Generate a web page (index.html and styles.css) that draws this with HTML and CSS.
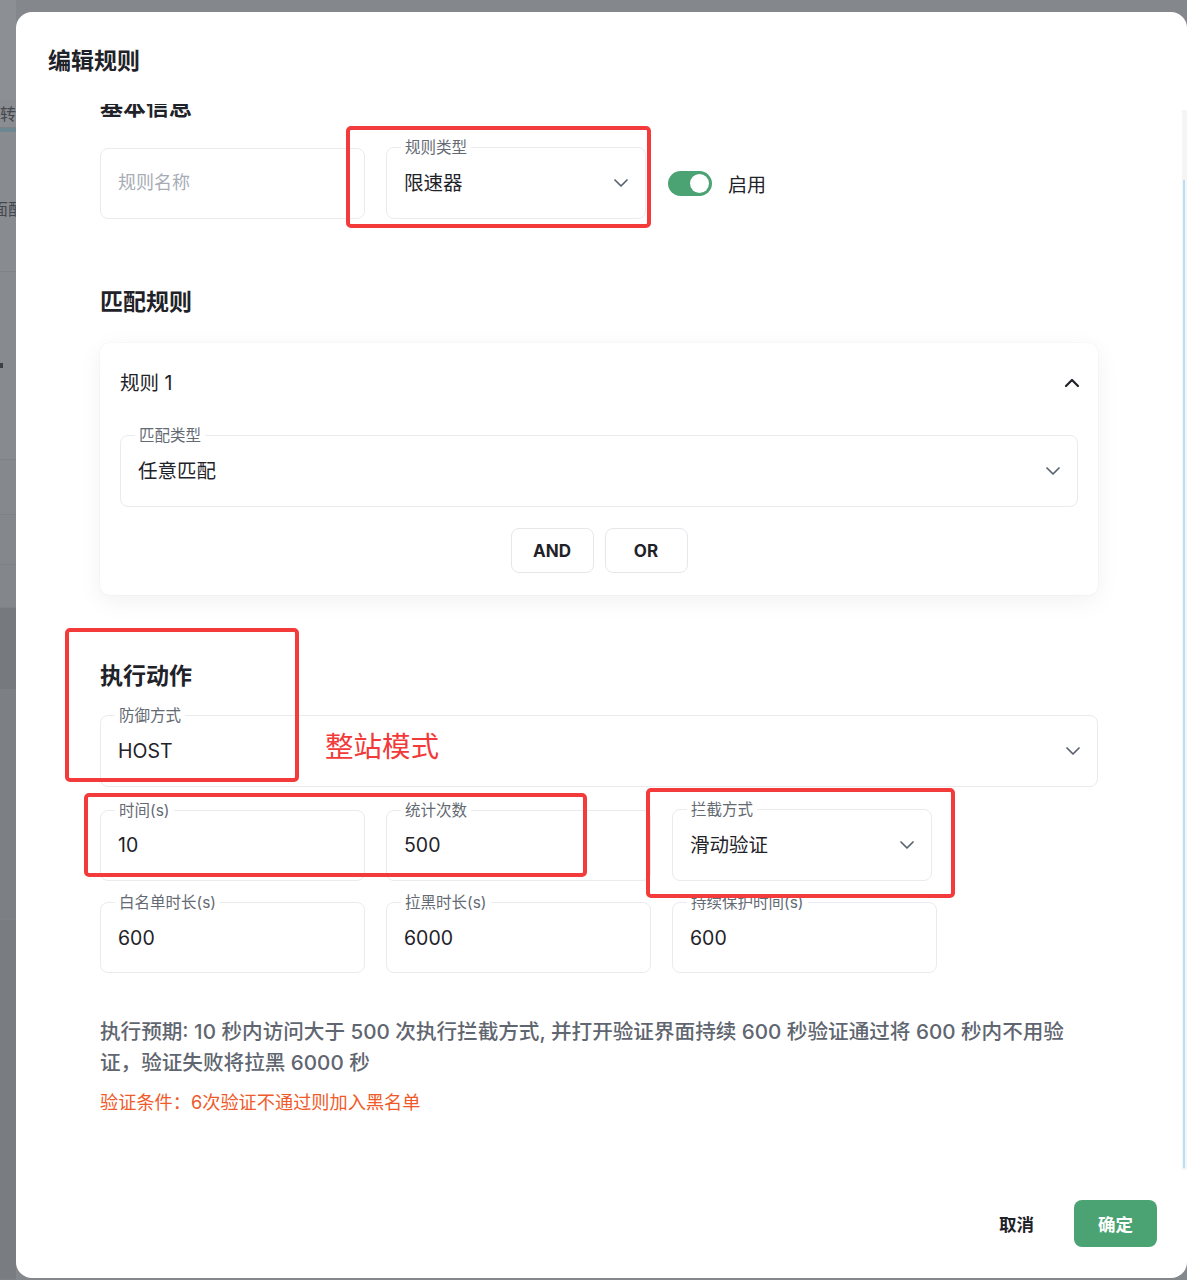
FILE: index.html
```html
<!DOCTYPE html>
<html lang="zh-CN">
<head>
<meta charset="utf-8">
<title>编辑规则</title>
<link rel="stylesheet" href="styles.css">
</head>
<body>
<div class="page">
  <div class="bg-row r-top"></div>
  <div class="bg-row r-a"><span class="bg-text">跳转</span></div>
  <div class="bg-row r-bar"></div>
  <div class="bg-row r-b"><span class="bg-text">页面配</span></div>
  <div class="bg-row r-c"><span class="bg-dot"></span></div>
  <div class="bg-row r-d"></div>
  <div class="bg-row r-e"></div>
  <div class="bg-row r-f"></div>
  <div class="bg-row r-g"></div>
  <div class="bg-row r-h"></div>
  <div class="bg-row r-i"></div>
</div>

<div class="modal">
  <div class="modal-header"><h2 class="modal-title">编辑规则</h2></div>
  <div class="modal-body">
    <div class="body-inner">
      <h3 class="section-title first">基本信息</h3>
      <div class="grid3">
        <div class="field"><span class="placeholder">规则名称</span></div>
        <div class="field select narrow">
          <span class="flabel">规则类型</span>
          <span class="value">限速器</span>
          <svg class="chev" width="14" height="8" viewBox="0 0 14 8"><path d="M1 1l6 6 6-6" fill="none" stroke="#5b6370" stroke-width="1.7" stroke-linecap="round" stroke-linejoin="round"/></svg>
        </div>
        <div class="switch-wrap">
          <span class="switch"><span class="knob"></span></span>
          <span class="switch-label">启用</span>
        </div>
      </div>

      <h3 class="section-title s2">匹配规则</h3>
      <div class="card">
        <div class="card-head">
          <span class="card-title">规则 1</span>
          <svg width="16" height="10" viewBox="0 0 16 10"><path d="M2 8l6-6 6 6" fill="none" stroke="#1f2329" stroke-width="2.2" stroke-linecap="round" stroke-linejoin="round"/></svg>
        </div>
        <div class="field select wide">
          <span class="flabel">匹配类型</span>
          <span class="value">任意匹配</span>
          <svg class="chev" width="14" height="8" viewBox="0 0 14 8"><path d="M1 1l6 6 6-6" fill="none" stroke="#5b6370" stroke-width="1.7" stroke-linecap="round" stroke-linejoin="round"/></svg>
        </div>
        <div class="logic">
          <button class="logic-btn">AND</button>
          <button class="logic-btn">OR</button>
        </div>
      </div>

      <h3 class="section-title s3">执行动作</h3>
      <div class="field select full">
        <span class="flabel">防御方式</span>
        <span class="value">HOST</span>
        <svg class="chev" width="14" height="8" viewBox="0 0 14 8"><path d="M1 1l6 6 6-6" fill="none" stroke="#5b6370" stroke-width="1.7" stroke-linecap="round" stroke-linejoin="round"/></svg>
      </div>

      <div class="grid3 row3">
        <div class="field"><span class="flabel">时间(s)</span><span class="value">10</span></div>
        <div class="field"><span class="flabel">统计次数</span><span class="value">500</span></div>
        <div class="field select narrow">
          <span class="flabel">拦截方式</span>
          <span class="value">滑动验证</span>
          <svg class="chev" width="14" height="8" viewBox="0 0 14 8"><path d="M1 1l6 6 6-6" fill="none" stroke="#5b6370" stroke-width="1.7" stroke-linecap="round" stroke-linejoin="round"/></svg>
        </div>
      </div>
      <div class="grid3 row4">
        <div class="field"><span class="flabel">白名单时长(s)</span><span class="value">600</span></div>
        <div class="field"><span class="flabel">拉黑时长(s)</span><span class="value">6000</span></div>
        <div class="field"><span class="flabel">持续保护时间(s)</span><span class="value">600</span></div>
      </div>

      <p class="summary">执行预期: 10 秒内访问大于 500 次执行拦截方式, 并打开验证界面持续 600 秒验证通过将 600 秒内不用验证，验证失败将拉黑 6000 秒</p>
      <p class="warn">验证条件：6次验证不通过则加入黑名单</p>
    </div>
    <div class="scrollbar"><div class="thumb"></div></div>
  </div>
  <div class="modal-footer">
    <button class="btn-text">取消</button>
    <button class="btn-primary">确定</button>
  </div>
</div>

<div class="mark m1"></div>
<div class="mark m2"></div>
<div class="mark m3"></div>
<div class="mark m4"></div>
<div class="note">整站模式</div>
</body>
</html>
```

FILE: styles.css
```css
* { box-sizing: border-box; }
html, body { margin: 0; padding: 0; }
body {
  width: 1187px;
  height: 1280px;
  overflow: hidden;
  position: relative;
  background: #84878c;
  font-family: "Inter", "Noto Sans CJK SC", "Noto Sans", sans-serif;
  color: #1f2329;
}

/* background page under the mask */
.page { display: flex; flex-direction: column; width: 16px; }
.bg-row { border-bottom: 1px solid #7e8186; overflow: hidden; display: flex; align-items: center; justify-content: flex-end; }
.r-top { height: 100px; background: #8c8f93; border-bottom-color: #8c8f93; }
.r-a { height: 28px; background: #8a8d91; }
.r-bar { height: 4px; background: #6d8791; border: 0; }
.r-b { height: 140px; background: #888b90; align-items: flex-start; padding-top: 66px; }
.r-c { height: 188px; background: #878a8f; justify-content: flex-start; }
.r-d { height: 55px; background: #85888d; }
.r-e { height: 50px; background: #84878c; }
.r-f { height: 43px; background: #83868b; }
.r-g { height: 82px; background: #76797e; }
.r-h { height: 230px; background: #7c7f84; }
.r-i { height: 360px; background: #797c81; }
.bg-text { font-size: 16px; line-height: 22px; color: #44484e; white-space: nowrap; flex-shrink: 0; }
.r-b .bg-text { margin-right: -8px; }
.bg-dot { width: 3px; height: 5px; background: #3c4046; }

/* modal */
.modal {
  position: absolute;
  left: 16px;
  top: 12px;
  width: 1171px;
  height: 1266px;
  background: #ffffff;
  border-radius: 16px;
  display: flex;
  flex-direction: column;
  overflow: hidden;
}
.modal-header { height: 92px; padding: 35px 0 0 32px; flex-shrink: 0; }
.modal-title { margin: 0; font-size: 23px; line-height: 28px; font-weight: 700; color: #1f2329; }

.modal-body { height: 1066px; position: relative; overflow: hidden; flex-shrink: 0; }
.body-inner { padding-left: 84px; width: 1082px; margin-top: -11px; }

.section-title { margin: 0; font-size: 23px; line-height: 28px; font-weight: 700; color: #1f2329; }
.section-title.first { margin-bottom: 26px; }
.section-title.s2 { margin-top: 69px; margin-bottom: 27px; }
.section-title.s3 { margin-top: 67px; margin-bottom: 25px; }

.grid3 { display: grid; grid-template-columns: 265px 265px 265px; column-gap: 21px; align-items: center; }
.row3 { margin-top: 22px; }
.row4 { margin-top: 21px; }

.field {
  position: relative;
  height: 71px;
  border: 1px solid #e9ebee;
  border-radius: 8px;
  display: flex;
  align-items: center;
  padding: 0 17px;
}
.field.select { justify-content: space-between; }
.field.wide { height: 72px; }
.field.full { height: 72px; width: 998px; }
.field.narrow { width: 260px; height: 72px; }
.flabel {
  position: absolute;
  left: 14px;
  top: -10px;
  padding: 0 4px;
  background: #ffffff;
  font-size: 15.5px;
  line-height: 20px;
  color: #646a73;
  white-space: nowrap;
}
.value { font-size: 19.5px; line-height: 26px; color: #1f2329; }
.placeholder { font-size: 18px; line-height: 26px; color: #a8adb5; }
.chev { flex-shrink: 0; }

.switch-wrap { display: flex; align-items: center; gap: 16px; margin-left: -4px; }
.switch {
  width: 44px; height: 25px; border-radius: 13px; background: #4ba373;
  display: flex; align-items: center; justify-content: flex-end; padding: 0 3px;
}
.knob { width: 19px; height: 19px; border-radius: 50%; background: #ffffff; }
.switch-label { font-size: 19px; color: #1f2329; }

.card {
  width: 998px;
  border-radius: 10px;
  background: #ffffff;
  box-shadow: 0 6px 24px rgba(0, 0, 0, 0.06), 0 0 0 1px rgba(0, 0, 0, 0.015);
  padding: 20px 20px 22px 20px;
}
.card-head { height: 40px; display: flex; align-items: center; justify-content: space-between; margin-right: -2px; margin-bottom: 32px; }
.card-title { font-size: 19.5px; line-height: 26px; color: #1f2329; }
.logic { display: flex; justify-content: center; gap: 11px; margin-top: 21px; }
.logic-btn {
  width: 83px; height: 45px;
  border: 1px solid #e5e7eb; border-radius: 8px; background: #ffffff;
  font-family: "Inter", "Noto Sans", sans-serif; font-size: 17px; font-weight: 700; color: #1f2329;
}

.summary {
  margin: 43px 0 0 0;
  max-width: 980px;
  font-size: 20.6px;
  line-height: 31px;
  font-weight: 500;
  color: #5f6670;
}
.warn { margin: 11px 0 0 0; font-size: 18.2px; line-height: 26px; color: #f05a2a; }

.scrollbar { position: absolute; right: 0; top: 6px; width: 5px; height: 1060px; background: #f4f5f6; }
.thumb { margin-top: 70px; margin-left: 1px; width: 2px; height: 988px; background: #b9e0f5; }

.modal-footer { flex: 1; display: flex; align-items: center; justify-content: flex-end; gap: 24px; padding-right: 30px; padding-bottom: 2px; }
.btn-text { border: 0; background: transparent; font-family: "Noto Sans CJK SC", sans-serif; font-size: 17.5px; font-weight: 700; color: #1f2329; padding: 0 16px; }
.btn-primary {
  width: 83px; height: 47px; border: 0; border-radius: 8px; background: #4ba373;
  font-family: "Noto Sans CJK SC", sans-serif; font-size: 17.5px; font-weight: 700; color: #ffffff;
}

/* annotation overlays */
.mark { position: absolute; border: 4px solid #f43b3b; border-radius: 5px; }
.m1 { left: 346px; top: 126px; width: 305px; height: 102px; }
.m2 { left: 65px; top: 628px; width: 234px; height: 154px; }
.m3 { left: 84px; top: 793px; width: 503px; height: 84px; }
.m4 { left: 646px; top: 788px; width: 309px; height: 110px; }
.note { position: absolute; left: 325px; top: 726px; font-size: 28.5px; line-height: 38px; color: #f23a3a; font-family: "Noto Sans CJK SC", sans-serif; }
```
